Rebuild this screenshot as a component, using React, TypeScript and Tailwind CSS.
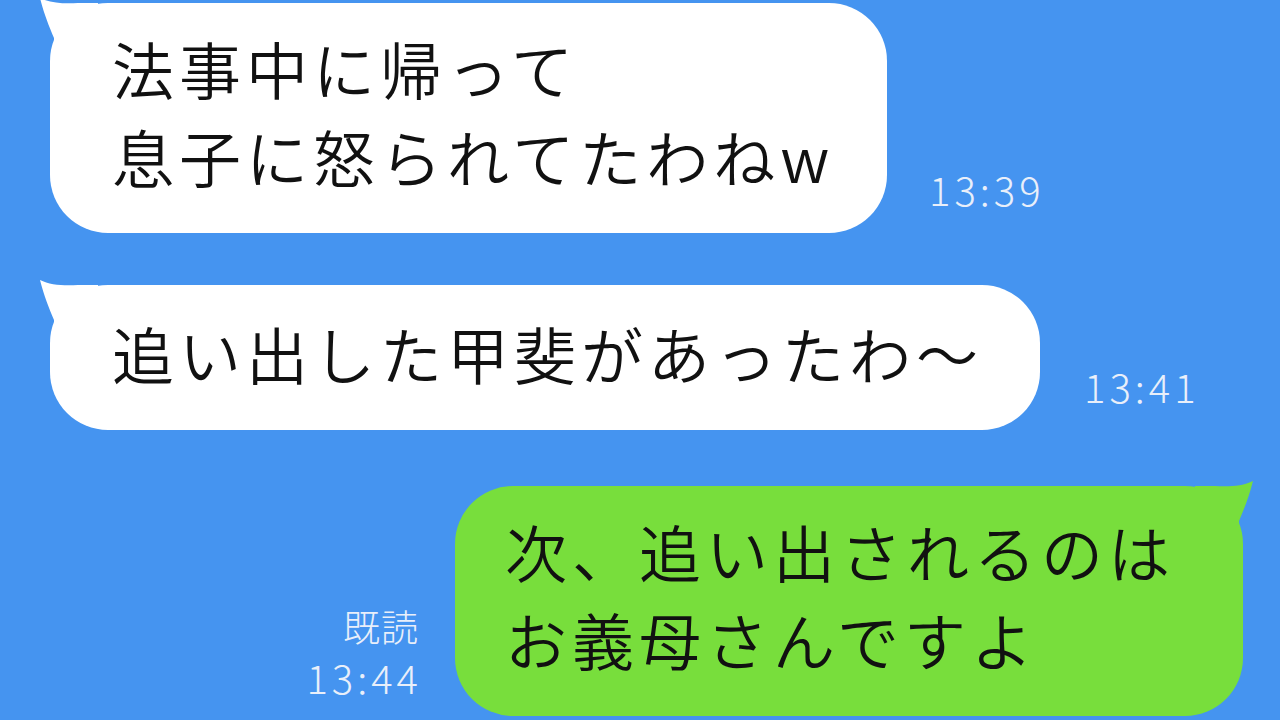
import React from "react";

const JP = { fontFamily: '"Noto Sans CJK JP", "Noto Sans", sans-serif' };

function TailLeft({ color }: { color: string }) {
  return (
    <svg
      className="absolute left-[-12px] top-[-5px]"
      width="60"
      height="60"
      viewBox="0 0 60 60"
      fill={color}
    >
      <path d="M2 0 C 6 16, 11 28, 16 40 L 16 60 L 60 60 L 60 5 L 40 5 C 26 6, 12 5, 2 0 Z" />
    </svg>
  );
}

function TailRight({ color }: { color: string }) {
  return (
    <svg
      className="absolute right-[-12px] top-[-5px]"
      width="60"
      height="60"
      viewBox="0 0 60 60"
      fill={color}
    >
      <path d="M58 0 C 54 16, 49 28, 44 40 L 44 60 L 0 60 L 0 5 L 20 5 C 34 6, 48 5, 58 0 Z" />
    </svg>
  );
}

export default function App() {
  return (
    <div
      className="w-[1280px] h-[720px] bg-[#4594f0] overflow-hidden flex flex-col"
      style={JP}
    >
      {/* Row 1 */}
      <div className="flex items-end pl-[50px] mt-[3px]">
        <div className="relative w-[837px] h-[230px] bg-white rounded-[58px] flex flex-col justify-center pl-[62px] pb-[12px] text-[62px] leading-[88px] tracking-[5px] text-[#111] font-[350]">
          <TailLeft color="#ffffff" />
          <div className="relative">法事中に帰って</div>
          <div className="relative">息子に怒られてたわねw</div>
        </div>
        <div className="ml-[42px] mb-[22px] text-[40px] leading-[44px] tracking-[4px] text-[#e9effa] font-light">
          13:39
        </div>
      </div>

      {/* Row 2 */}
      <div className="flex items-end pl-[50px] mt-[52px]">
        <div className="relative w-[990px] h-[145px] bg-white rounded-[58px] flex items-center pl-[62px] pb-[10px] text-[62px] leading-[88px] tracking-[5px] text-[#111] font-[350]">
          <TailLeft color="#ffffff" />
          <div className="relative">追い出した甲斐があったわ〜</div>
        </div>
        <div className="ml-[44px] mb-[22px] text-[40px] leading-[44px] tracking-[4px] text-[#e9effa] font-light">
          13:41
        </div>
      </div>

      {/* Row 3 */}
      <div className="flex items-end justify-end pr-[37px] mt-[56px]">
        <div className="mr-[37px] mb-[17px] flex flex-col items-end text-[#e9effa] font-light">
          <div className="text-[37px] leading-[40px] tracking-[1px] mr-[-1px] mb-[9px]">既読</div>
          <div className="text-[40px] leading-[44px] tracking-[4px] mr-[-4px]">13:44</div>
        </div>
        <div className="relative w-[788px] h-[230px] bg-[#78de3c] rounded-[58px] flex flex-col justify-center pl-[50px] pb-[12px] text-[62px] leading-[88px] tracking-[5px] text-[#111] font-[350]">
          <TailRight color="#78de3c" />
          <div className="relative">次、追い出されるのは</div>
          <div className="relative">お義母さんですよ</div>
        </div>
      </div>
    </div>
  );
}
